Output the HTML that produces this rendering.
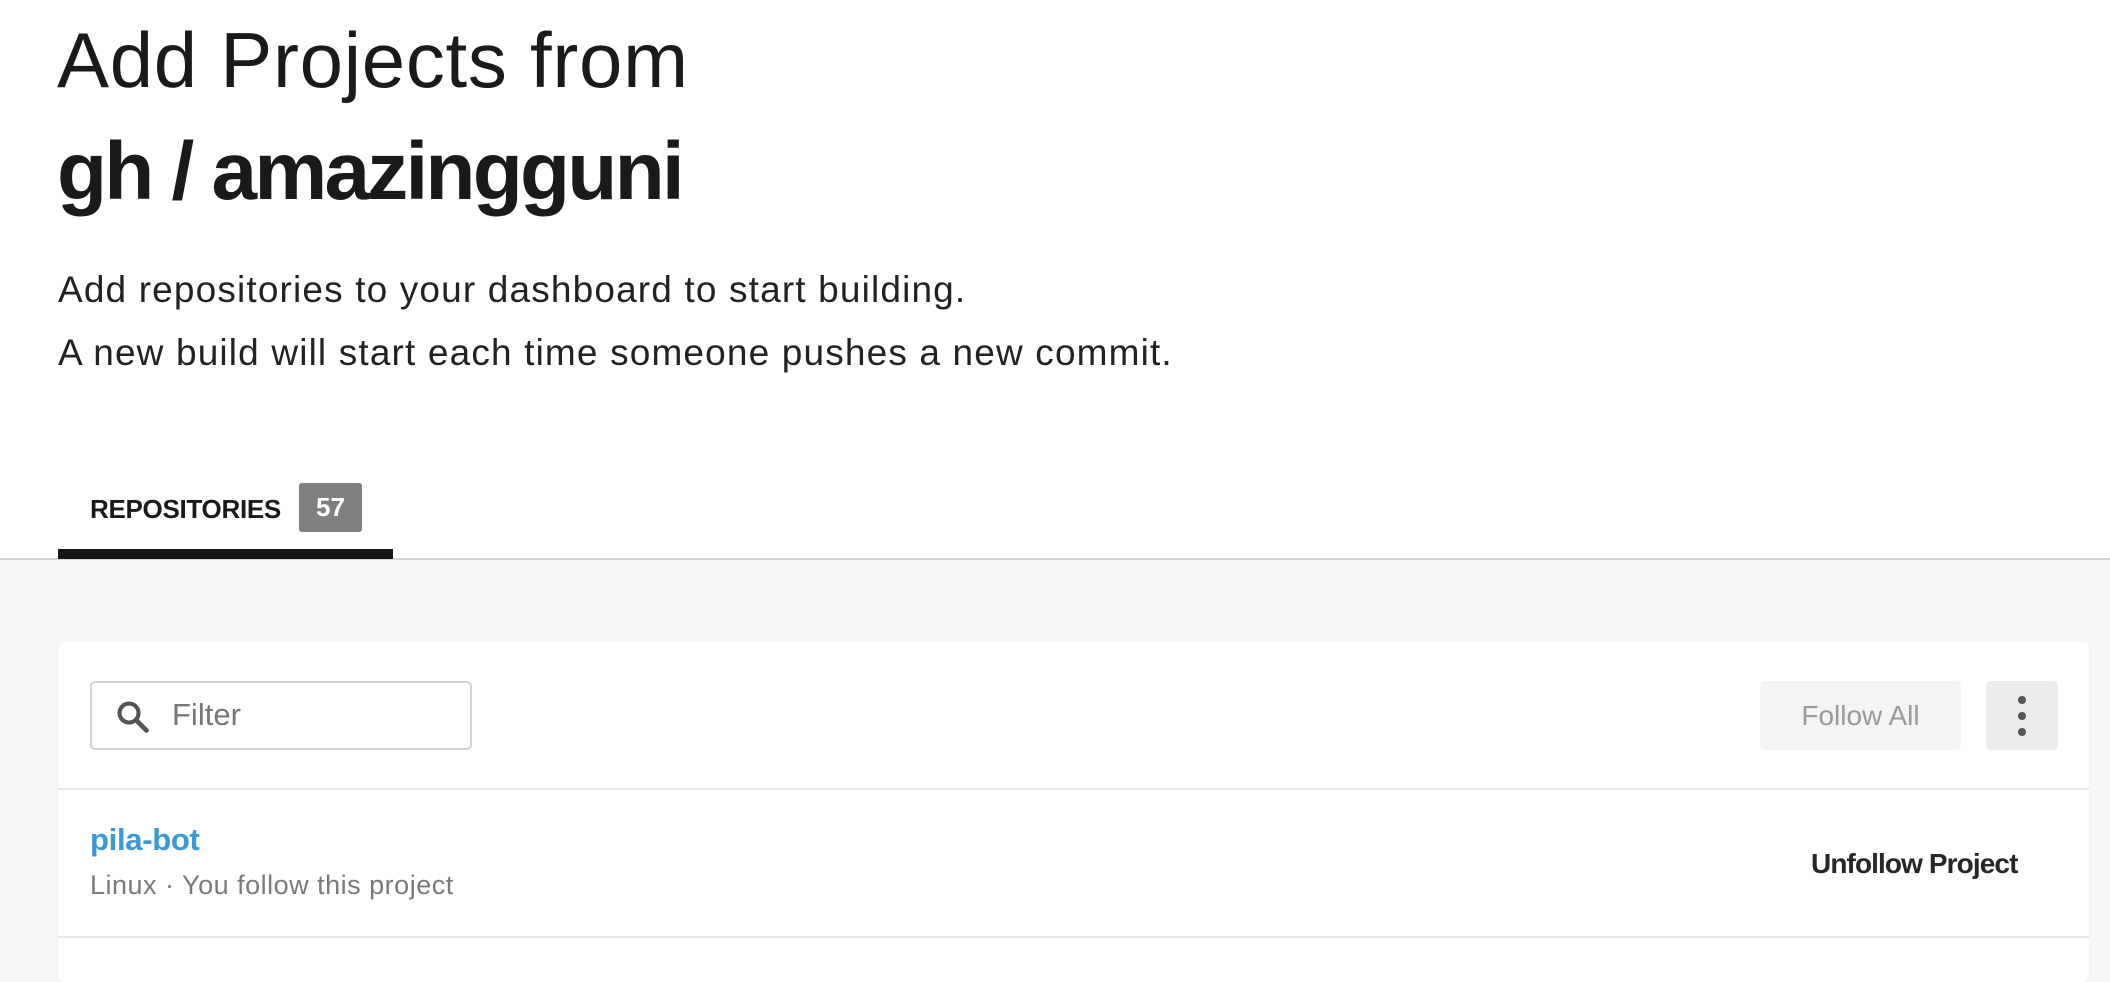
<!DOCTYPE html>
<html><head><meta charset="utf-8"><style>
*{margin:0;padding:0;box-sizing:border-box}
body{width:2110px;height:968px;overflow:hidden;background:#f7f7f7;font-family:"Liberation Sans",sans-serif;color:#1a1a1a;position:relative}
.top{position:absolute;left:0;top:0;width:2110px;height:560px;background:#fff;border-bottom:2px solid #d6d6d6}
.a{position:absolute;white-space:nowrap}
.t1{left:57px;top:14px;font-size:78px;font-weight:300;letter-spacing:0.7px;line-height:92px}
.t2{left:57px;top:124px;font-size:82px;font-weight:700;letter-spacing:-2.8px;line-height:96px}
.d{left:58px;font-size:37px;letter-spacing:1.15px;color:#222}
.tab{left:90px;top:494px;font-size:26px;font-weight:700;letter-spacing:-0.3px}
.badge{left:299px;top:483px;width:63px;height:49px;background:#808080;color:#fff;border-radius:3px;font-size:26px;font-weight:700;text-align:center;line-height:49px}
.ul{left:58px;top:549px;width:335px;height:10px;background:#161616}
.card{position:absolute;left:58px;top:642px;width:2031px;height:340px;background:#fff;border-radius:6px;box-shadow:0 1px 2px rgba(0,0,0,.05)}
.inp{left:90px;top:681px;width:382px;height:69px;border:2px solid #d2d2d2;border-radius:5px}
.btn{left:1760px;top:681px;width:201px;height:69px;background:#f4f4f4;border-radius:5px;color:#9a9a9a;font-size:28px;text-align:center;line-height:69px}
.keb{left:1986px;top:681px;width:72px;height:69px;background:#ebebeb;border-radius:5px}
.dot{position:absolute;left:32px;width:8px;height:8px;border-radius:50%;background:#555}
.hr{left:58px;width:2031px;height:2px;background:#e6e6e6}
</style></head><body>
<div class="top"></div>
<div class="a t1">Add Projects from</div>
<div class="a t2">gh / amazingguni</div>
<div class="a d" style="top:269px">Add repositories to your dashboard to start building.</div>
<div class="a d" style="top:332px">A new build will start each time someone pushes a new commit.</div>
<div class="a tab">REPOSITORIES</div>
<div class="a badge">57</div>
<div class="a ul"></div>
<div class="card"></div>
<div class="a inp">
<svg style="position:absolute;left:22px;top:15px" width="38" height="38" viewBox="0 0 24 24"><circle cx="9.5" cy="9.5" r="6" fill="none" stroke="#555" stroke-width="2.6"/><path d="M14 14l6.5 6.5" stroke="#555" stroke-width="3" stroke-linecap="round"/></svg>
<span style="position:absolute;left:80px;top:14px;font-size:31px;color:#777">Filter</span>
</div>
<div class="a btn">Follow All</div>
<div class="a keb"><div class="dot" style="top:15px"></div><div class="dot" style="top:31px"></div><div class="dot" style="top:47px"></div></div>
<div class="a hr" style="top:788px"></div>
<div class="a" style="left:90px;top:822px;font-size:31px;font-weight:700;color:#3a98dc;letter-spacing:-0.3px">pila-bot</div>
<div class="a" style="left:90px;top:870px;font-size:27px;color:#7a7a7a;letter-spacing:0.5px">Linux · You follow this project</div>
<div class="a" style="left:1811px;top:848px;font-size:28px;font-weight:700;color:#262626;letter-spacing:-0.9px">Unfollow Project</div>
<div class="a hr" style="top:936px"></div>
</body></html>
